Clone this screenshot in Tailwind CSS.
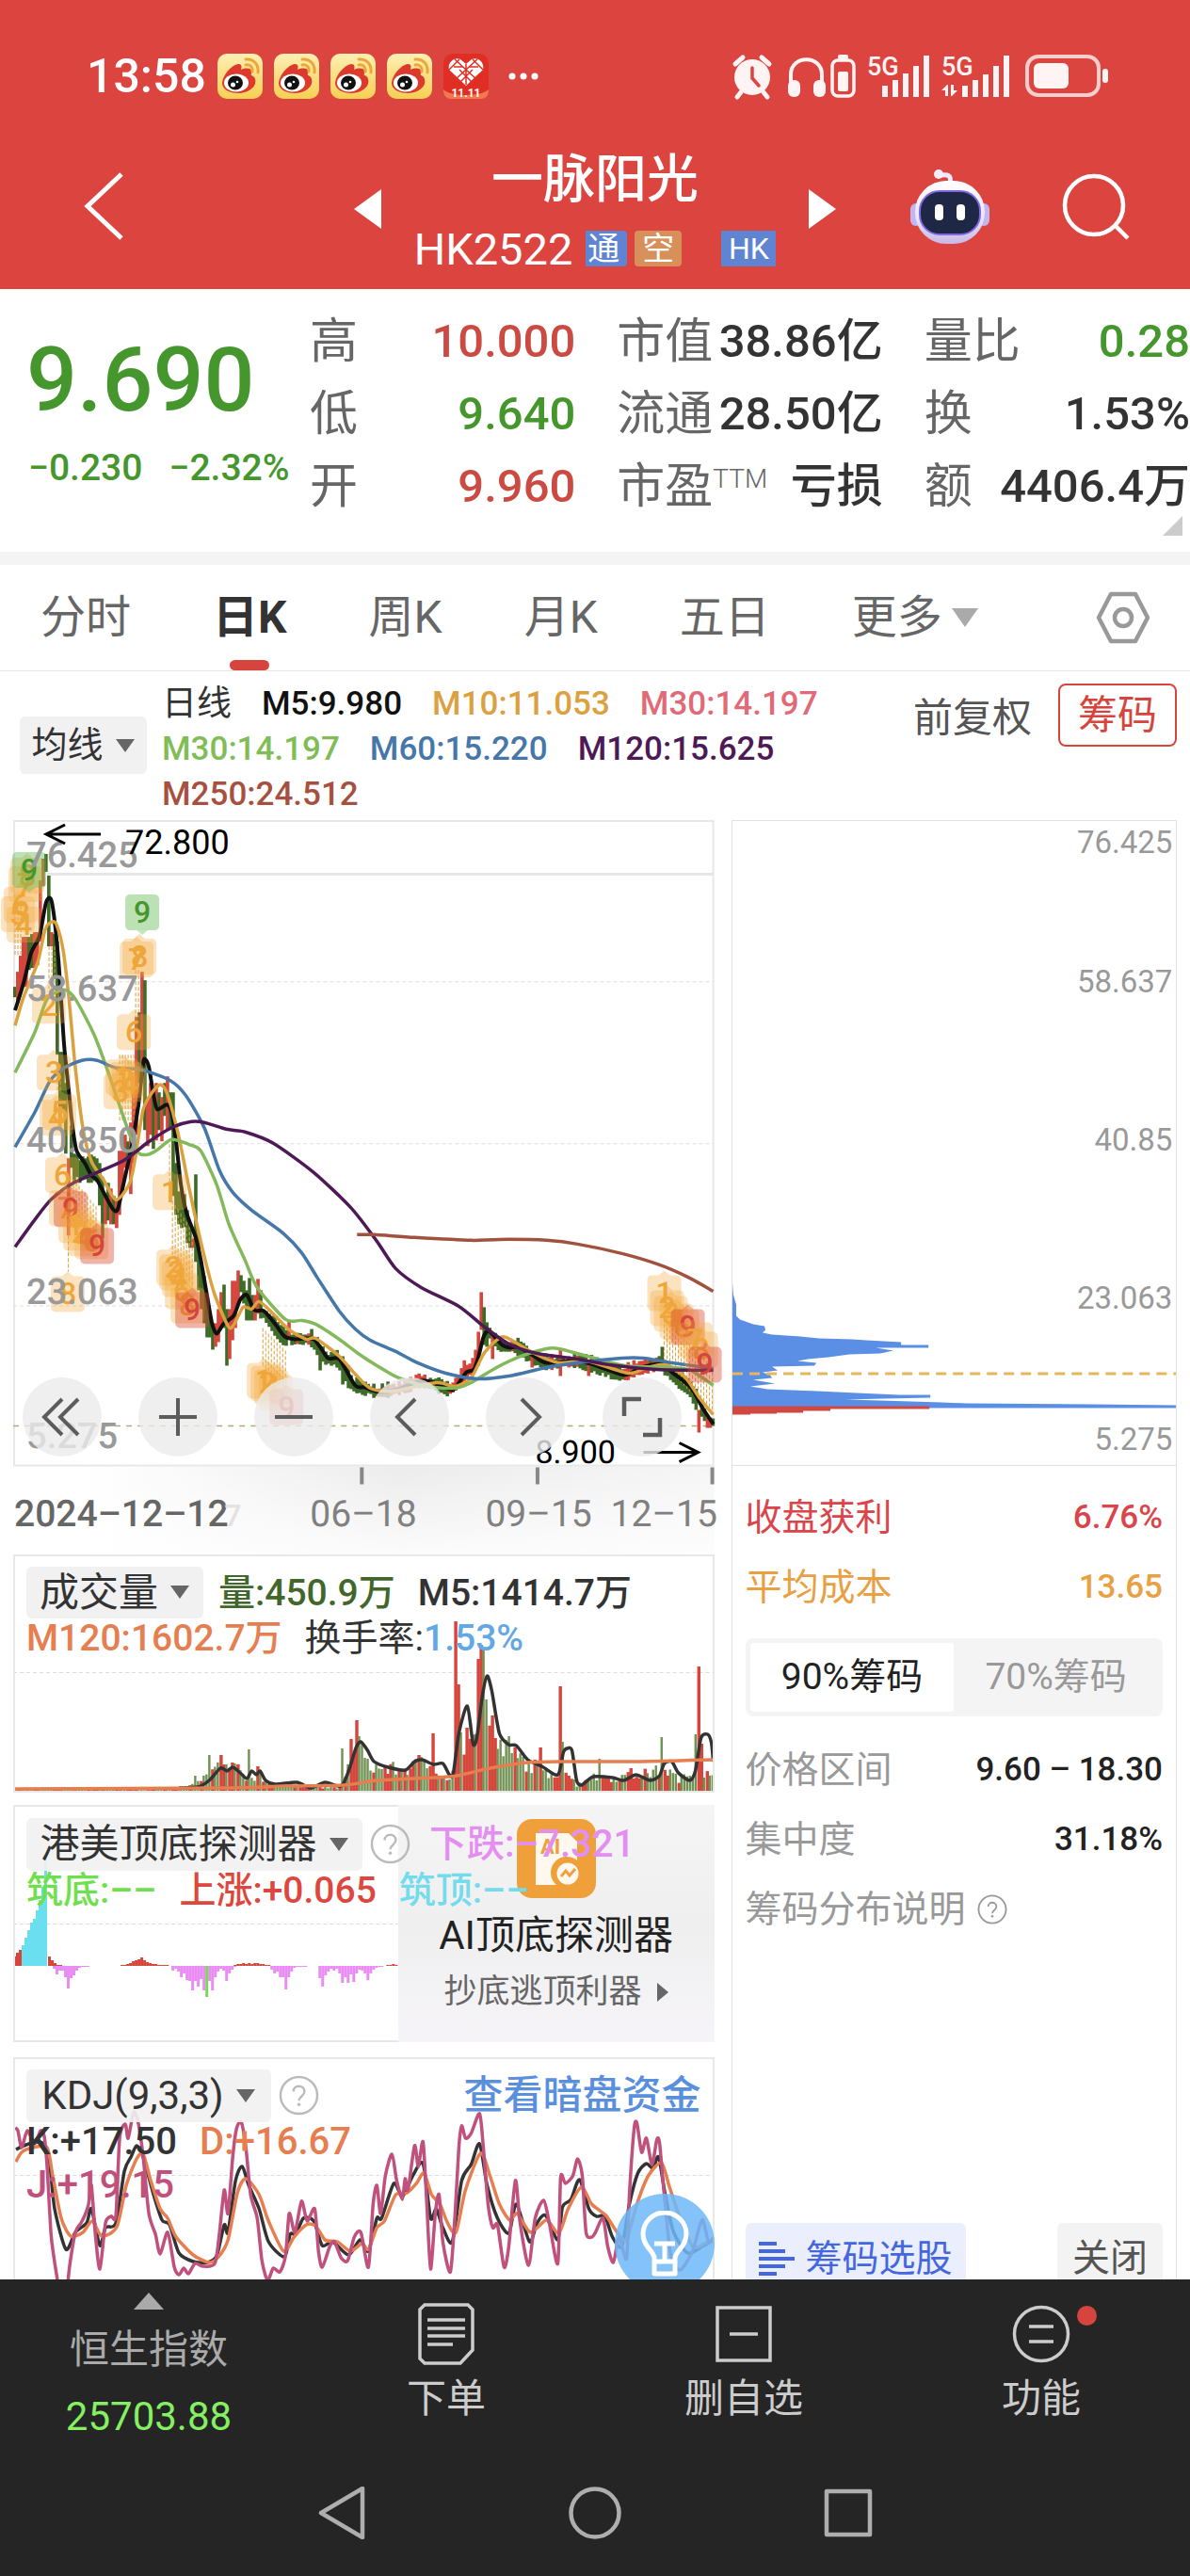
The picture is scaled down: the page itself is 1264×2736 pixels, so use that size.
<!DOCTYPE html>
<html lang="zh-CN">
<head>
<meta charset="utf-8">
<meta name="viewport" content="width=device-width, initial-scale=1">
<title>一脉阳光 HK2522</title>
<script src="https://cdn.jsdelivr.net/npm/@tailwindcss/browser@4"></script>
</head>
<body class="relative flex h-screen flex-col overflow-hidden bg-white font-['Roboto','Noto_Sans_CJK_SC',sans-serif] text-[#333]">

<!-- shared symbols -->
<svg class="absolute size-0" aria-hidden="true">
  <defs>
    <linearGradient id="wbg" x1="0" y1="0" x2="0" y2="1"><stop offset="0" stop-color="#fdf0b4"/><stop offset="1" stop-color="#f7cf52"/></linearGradient>
    <symbol id="weibo" viewBox="0 0 48 48">
      <rect width="48" height="48" rx="10" fill="url(#wbg)"/>
      <path d="M5 31C6 22 15 12 22 11c4 0 4 3 3 6 5-2 10-2 11 1 1 2-1 4 0 5 4 1 5 5 4 9-2 6-10 10-18 10C13 42 5 38 5 31z" fill="#dc3a2c"/>
      <ellipse cx="20" cy="31" rx="13" ry="9.500" fill="#fff"/>
      <ellipse cx="19" cy="31" rx="8" ry="7.500" fill="#111"/>
      <circle cx="16.500" cy="33" r="2.500" fill="#fff"/><circle cx="21" cy="30" r="1.300" fill="#fff"/>
      <path d="M30 6c8-1 14 5 13 14M30 12c4-1 8 2 7 7" fill="none" stroke="#eda63a" stroke-width="3" stroke-linecap="round"/>
    </symbol>
    <symbol id="down" viewBox="0 0 22 16"><path d="M1 1h20L11 15z" fill="currentColor"/></symbol>
    <symbol id="help" viewBox="0 0 44 44">
      <circle cx="22" cy="22" r="20" fill="none" stroke="currentColor" stroke-width="2.500"/>
      <path d="M16 18c0-8 12-8 12 0 0 5-6 5-6 10" fill="none" stroke="currentColor" stroke-width="2.500"/>
      <circle cx="22" cy="32" r="1.800" fill="currentColor"/>
    </symbol>
  </defs>
</svg>

<header class="shrink-0 bg-[#dc4440] text-white">
  <!-- status bar -->
  <div class="flex h-[148px] items-center justify-between pt-3.5 pr-[86px] pl-[92px]">
    <div class="flex items-center gap-3">
      <span class="text-[50px] leading-none font-medium">13:58</span>
      <svg class="size-12"><use href="#weibo"/></svg>
      <svg class="size-12"><use href="#weibo"/></svg>
      <svg class="size-12"><use href="#weibo"/></svg>
      <svg class="size-12"><use href="#weibo"/></svg>
      <svg class="size-12 overflow-visible" viewBox="0 0 48 48">
        <rect width="48" height="48" rx="10" fill="#e02e24"/>
        <path d="M0 38c8 8 40 8 48 0v2a8 8 0 0 1-8 8H8a8 8 0 0 1-8-8z" fill="#f2784e"/>
        <path d="M24 34 6 17c-2-8 6-14 12-11l6 5 6-5c6-3 14 3 12 11z" fill="#fff"/>
        <path d="m12 6 24 22M36 6 12 28M6 17l11-11M42 17 31 6M18 30l13-13M30 30 17 17M24 11v22M11 14h10M27 14h10" stroke="#e02e24" stroke-width="1.500" fill="none"/>
        <text x="24" y="46" text-anchor="middle" font-family="Roboto" font-weight="700" font-size="12" fill="#fff">11.11</text>
      </svg>
      <svg class="ml-2 w-9" viewBox="0 0 36 8" fill="#fff"><circle cx="5" cy="4" r="3.500"/><circle cx="17" cy="4" r="3.500"/><circle cx="29" cy="4" r="3.500"/></svg>
    </div>
    <svg class="h-12 w-[402px] overflow-visible" viewBox="776 57 402 48" fill="#fff3f3">
      <circle cx="799" cy="82" r="19"/><path d="m781 68 8-7M817 68l-8-7M787 98l-4 5M811 98l4 5" stroke="#fff3f3" stroke-width="5" stroke-linecap="round"/>
      <path d="M799 72v11l7 8" fill="none" stroke="#dc4440" stroke-width="3.500" stroke-linecap="round"/>
      <path d="M840 88v-9c0-21 33-21 33 0v9" fill="none" stroke="#fff3f3" stroke-width="4"/><rect x="837" y="85" width="13" height="18" rx="6"/><rect x="864" y="85" width="13" height="18" rx="6"/>
      <rect x="884" y="64" width="23" height="38" rx="6" fill="none" stroke="#fff3f3" stroke-width="3.500"/><rect x="890" y="76" width="11" height="21" rx="2"/><rect x="890" y="58" width="11" height="5" rx="2"/>
      <text x="921" y="80" font-family="Roboto" font-size="27" font-weight="500">5G</text>
      <path d="M937 91h6v12h-6zM948 85h6v18h-6zM959 78h6v25h-6zM970 70h6v33h-6zM981 59h6v44h-6z"/>
      <text x="1000" y="80" font-family="Roboto" font-size="27" font-weight="500">5G</text>
      <path d="M1022 91h6v12h-6zM1033 85h6v18h-6zM1044 79h6v24h-6zM1055 70h6v33h-6zM1066 59h6v44h-6zM1006 90l-6 6h4v6h3V90zM1011 102l6-6h-4v-6h-3v12z"/>
      <rect x="1091" y="60" width="76" height="41" rx="12" fill="none" stroke="#f6cfcd" stroke-width="4"/><rect x="1098" y="67" width="37" height="27" rx="6"/><rect x="1171" y="73" width="6" height="15" rx="3"/>
    </svg>
  </div>
  <!-- title bar -->
  <div class="grid h-[159px] grid-cols-[1fr_514px_1fr]">
    <div class="flex h-36 items-center pl-[88px]">
      <button aria-label="返回"><svg class="h-20 w-11" viewBox="0 0 44 80"><path d="M41 5 5 39l36 34" fill="none" stroke="#fff" stroke-width="5"/></svg></button>
    </div>
    <div class="flex justify-between">
      <button aria-label="上一只" class="h-[148px]"><svg class="w-[30px]" viewBox="0 0 30 42"><path d="M30 0v42L1 21z" fill="#fff"/></svg></button>
      <div class="pt-[3px]">
        <h1 class="text-center text-[55px] leading-[78px] font-medium">一脉阳光</h1>
        <div class="flex h-[70px] items-center justify-center">
          <span class="mr-3.5 text-[47px] leading-none">HK2522</span>
          <span class="mr-2 flex w-11 justify-end overflow-hidden rounded-r bg-[#5e84d2] pr-2 text-[34px] leading-[38px]">通</span>
          <span class="mr-[42px] w-[50px] rounded bg-[#d8905a] text-center text-[34px] leading-[38px]">空</span>
          <span class="w-[58px] bg-[#5e84d2] text-center text-[32px] leading-[38px]">HK</span>
        </div>
      </div>
      <button aria-label="下一只" class="h-[148px]"><svg class="w-[30px]" viewBox="0 0 30 42"><path d="M0 0v42l29-21z" fill="#fff"/></svg></button>
    </div>
    <div class="flex h-36 items-center justify-end gap-[76px] pr-16">
      <button aria-label="智能助手"><svg class="w-[86px]" viewBox="0 0 86 80">
        <defs><linearGradient id="rb" x1="0" y1="0" x2="0" y2="1"><stop offset="0" stop-color="#fff"/><stop offset=".6" stop-color="#e6e4f8"/><stop offset="1" stop-color="#c9b8e6"/></linearGradient></defs>
        <path d="M43 14c2-8-3-9-9-8" fill="none" stroke="#eee9fb" stroke-width="5" stroke-linecap="round"/><circle cx="31" cy="5" r="5" fill="#f2effc"/>
        <rect x="1" y="36" width="12" height="24" rx="6" fill="#c3b5ef"/><rect x="73" y="36" width="12" height="24" rx="6" fill="#c3b5ef"/>
        <rect x="6" y="12" width="74" height="67" rx="33" fill="url(#rb)"/><rect x="11" y="23" width="64" height="46" rx="21" fill="#1e2746" stroke="#7d68e2" stroke-width="2"/>
        <rect x="27" y="37" width="9" height="17" rx="4" fill="#fff"/><rect x="50" y="37" width="9" height="17" rx="4" fill="#fff"/>
      </svg></button>
      <button aria-label="搜索"><svg class="w-[72px]" viewBox="0 0 72 72" fill="none" stroke="#fff" stroke-width="4.500"><circle cx="34" cy="34" r="31"/><path d="m57 56 13 13"/></svg></button>
    </div>
  </div>
</header>

<main class="min-h-0 flex-1 overflow-y-auto [scrollbar-width:none]">
  <!-- quote -->
  <section class="relative flex pb-[31px] whitespace-nowrap">
    <div class="w-[329px] shrink-0 pt-[46px] pl-7 text-[#45962d]">
      <div class="text-[95px] leading-[102px] font-medium">9.690</div>
      <div class="flex gap-7 pl-0.5 text-[39px] leading-[84px] font-medium"><span>−0.230</span><span>−2.32%</span></div>
    </div>
    <dl class="grid flex-1 grid-cols-3 gap-x-11 pt-[17px] text-[49px] leading-[77px] font-medium text-[#333] *:flex *:justify-between">
      <div><dt class="text-[51px] font-normal text-[#666]">高</dt><dd class="text-[#cb4a42]">10.000</dd></div>
      <div><dt class="text-[51px] font-normal text-[#666]">市值</dt><dd>38.86亿</dd></div>
      <div><dt class="text-[51px] font-normal text-[#666]">量比</dt><dd class="text-[#45962d]">0.28</dd></div>
      <div><dt class="text-[51px] font-normal text-[#666]">低</dt><dd class="text-[#45962d]">9.640</dd></div>
      <div><dt class="text-[51px] font-normal text-[#666]">流通</dt><dd>28.50亿</dd></div>
      <div><dt class="text-[51px] font-normal text-[#666]">换</dt><dd>1.53%</dd></div>
      <div><dt class="text-[51px] font-normal text-[#666]">开</dt><dd class="text-[#cb4a42]">9.960</dd></div>
      <div><dt class="flex text-[51px] font-normal text-[#666]">市盈<span class="text-[28px] leading-[62px] font-light">TTM</span></dt><dd>亏损</dd></div>
      <div><dt class="text-[51px] font-normal text-[#666]">额</dt><dd>4406.4万</dd></div>
    </dl>
    <svg class="absolute right-2 bottom-[17px] size-[21px]" viewBox="0 0 21 21"><path d="M21 0v21H0z" fill="#ccc"/></svg>
  </section>

  <!-- period tabs -->
  <nav class="flex h-[127px] items-center gap-[87px] border-t-[14px] border-b border-t-[#f4f4f4] border-b-[#e6e6e6] pr-[42px] pl-[43px] text-[48px] leading-none whitespace-nowrap text-[#666]">
    <a href="#">分时</a>
    <a href="#" class="relative flex h-full items-center font-bold text-[#333]">日K<span class="absolute bottom-0 left-1/2 h-[11px] w-[42px] -translate-x-1/2 rounded-md bg-[#d6453d]"></span></a>
    <a href="#">周K</a>
    <a href="#">月K</a>
    <a href="#">五日</a>
    <button class="flex items-center gap-2.5">更多<svg class="h-5 w-7 text-[#aaa]" viewBox="0 0 22 16" preserveAspectRatio="none"><path d="M0 0h22L11 16z" fill="currentColor"/></svg></button>
    <button aria-label="设置" class="ml-auto"><svg class="w-[58px]" viewBox="0 0 58 56" fill="none" stroke="#999" stroke-width="4.500" stroke-linejoin="round"><path d="M16 3h26l13 25-13 25H16L3 28z"/><circle cx="29" cy="28" r="9"/></svg></button>
  </nav>

  <!-- moving average legend -->
  <section class="flex items-start pt-[11px] pr-[14px] pb-[3px] pl-[21px] whitespace-nowrap">
    <button class="mt-[37px] mr-[16px] flex h-[61px] w-[135px] items-center justify-center gap-3 rounded-md bg-[#f1f1f1] text-[38px]">均线<svg class="h-4 w-[22px] text-[#666]"><use href="#down"/></svg></button>
    <div class="flex-1 text-[35px] leading-[48px] font-medium">
      <div class="flex gap-8"><span class="text-[37px] font-normal">日线</span><span class="text-[#111]">M5:9.980</span><span class="text-[#dba13f]">M10:11.053</span><span class="text-[#e06a76]">M30:14.197</span></div>
      <div class="flex gap-8"><span class="text-[#80bd57]">M30:14.197</span><span class="text-[#4577a8]">M60:15.220</span><span class="text-[#4d1a56]">M120:15.625</span></div>
      <div class="text-[#a6513f]">M250:24.512</div>
    </div>
    <div class="flex items-center gap-7 pt-0.5 text-[42px] leading-none"><span class="pt-1.5 text-[#555]">前复权</span><button class="h-[67px] rounded-lg border-2 border-[#d6453d] px-[19px] text-[#d6453d]">筹码</button></div>
  </section>

  <div class="grid grid-cols-[744fr_473fr] gap-x-[18px] px-[14px]">
    <div class="flex flex-col">
      <!-- candlestick chart -->
      <div class="relative">
        <svg id="kline" class="block h-auto w-full overflow-visible font-medium" viewBox="14 871 744 779" font-family="Roboto" text-rendering="geometricPrecision">
          <defs><linearGradient id="haze" x1="0" x2="1"><stop offset=".1" stop-color="#eee" stop-opacity="0"/><stop offset=".55" stop-color="#ececec"/><stop offset="1" stop-color="#f6f6f6"/></linearGradient>
          <linearGradient id="fade" x1="0" y1="0" x2="0" y2="1"><stop offset="0" stop-color="#fff" stop-opacity="0"/><stop offset="1" stop-color="#fff" stop-opacity=".8"/></linearGradient></defs>
          <rect x="14" y="1557" width="744" height="93" fill="url(#haze)"/><rect x="14" y="1557" width="744" height="93" fill="url(#fade)"/>
          <rect x="15" y="872" width="742" height="684" fill="#fff" stroke="#e8e8e8" stroke-width="2"/>
          <path d="M50 928.500h707" stroke="#e6e6e6" stroke-width="3"/>
          <path d="M14 1042.500h743M14 1214.500h743M14 1386.500h743" stroke="#ddd" stroke-width="1" stroke-dasharray="4 3"/>
          <path d="M14 1514h743" stroke="#b9a779" stroke-width="1.500" stroke-dasharray="6 6"/>
        </svg>
        <div class="absolute top-[592px] right-[35px] left-[10px] flex justify-between text-[#5c5c5c] *:flex *:size-[84px] *:items-center *:justify-center *:rounded-full *:bg-[#ebebeb]/80">
          <button aria-label="最左"><svg class="size-11" viewBox="0 0 44 44" fill="none" stroke="currentColor" stroke-width="4"><path d="M22 3 3 22l19 19M39 3 20 22l19 19"/></svg></button>
          <button aria-label="放大"><svg class="size-11" viewBox="0 0 44 44" stroke="currentColor" stroke-width="4"><path d="M2 22h40M22 2v40"/></svg></button>
          <button aria-label="缩小"><svg class="size-11" viewBox="0 0 44 44" stroke="currentColor" stroke-width="4"><path d="M2 22h40"/></svg></button>
          <button aria-label="左移"><svg class="size-11" viewBox="0 0 44 44" fill="none" stroke="currentColor" stroke-width="4"><path d="M28 3 9 22l19 19"/></svg></button>
          <button aria-label="右移"><svg class="size-11" viewBox="0 0 44 44" fill="none" stroke="currentColor" stroke-width="4"><path d="m18 3 19 19-19 19"/></svg></button>
          <button aria-label="全屏"><svg class="size-11" viewBox="0 0 44 44" fill="none" stroke="currentColor" stroke-width="4.500"><path d="M3 21V3h18M41 23v18H23"/></svg></button>
        </div>
      </div>

      <!-- volume -->
      <section class="relative mb-[13px] h-[253px] border-2 border-[#e8e8e8] bg-white whitespace-nowrap">
        <svg id="vol" class="absolute inset-0 size-full" viewBox="16 1652 740 249" preserveAspectRatio="none"><path d="M14 1775.500h743" stroke="#ddd" stroke-dasharray="4 3"/></svg>
        <div class="relative pt-[11px] pl-3 text-[39px] font-medium">
          <div class="flex h-[55px] items-center"><button class="mr-4 flex h-full w-[188px] items-center justify-center gap-3 rounded-md bg-[#f1f1f1] text-[42px] font-normal">成交量<svg class="h-4 w-[22px] text-[#666]"><use href="#down"/></svg></button><span class="mr-6 pt-0.5 text-[#41672b]">量:450.9万</span><span class="pt-0.5">M5:1414.7万</span></div>
          <div class="flex gap-6 leading-[42px]"><span class="text-[#e67e50]">M120:1602.7万</span><span class="font-normal">换手率:<span class="font-medium text-[#63a8e4]">1.53%</span></span></div>
        </div>
      </section>

      <!-- top/bottom detector -->
      <section class="relative mb-4 h-[252px] border-2 border-[#e8e8e8] whitespace-nowrap">
        <svg id="det" class="absolute inset-0 size-full" viewBox="16 1918 740 248" preserveAspectRatio="none"><path d="M14 2042.500h410" stroke="#ddd" stroke-dasharray="4 3"/></svg>
        <a href="#" class="absolute -inset-y-0.5 -right-0.5 flex w-[336px] flex-col items-center bg-linear-to-b from-[#f5f5f6] via-[#efefef] to-[#f6f4f8] pt-[15px]">
          <svg class="size-[84px]" viewBox="0 0 84 84"><rect width="84" height="84" rx="16" fill="#f0a03a"/><path d="M20 15h35l9 9v20a15 15 0 0 0-22 26H20z" fill="#fff8ee"/><text x="25" y="37" font-family="Roboto" font-weight="700" font-size="22" fill="#f0a03a">AI</text><circle cx="54" cy="58" r="13" fill="#fff8ee" stroke="#f0a03a" stroke-width="3"/><path d="m47 61 5-6 4 5 6-7" fill="none" stroke="#f0a03a" stroke-width="3"/></svg>
          <span class="mt-2 text-[42px] leading-[64px] text-[#222]">AI顶底探测器</span>
          <span class="mt-0.5 flex items-center gap-4 text-[35px] leading-[52px] text-[#666]">抄底逃顶利器<svg class="h-5 w-3" viewBox="0 0 12 20"><path d="M0 0v20l12-10z" fill="#666"/></svg></span>
        </a>
        <div class="relative pt-3 pl-3 text-[39px] font-medium">
          <div class="flex h-[56px] items-center"><button class="mr-2 flex h-full w-[357px] items-center justify-center gap-3 rounded-md bg-[#f1f1f1]/90 text-[42px] font-normal">港美顶底探测器<svg class="h-4 w-[22px] text-[#666]"><use href="#down"/></svg></button><button aria-label="说明" class="mr-5 text-[#bbb]"><svg class="size-[43px]"><use href="#help"/></svg></button><span class="text-[40px] text-[#e38ef0]">下跌:–7.321</span></div>
          <div class="flex gap-6 leading-[42px]"><span class="text-[#70df4e]">筑底:––</span><span class="text-[#dd473d]">上涨:+0.065</span><span class="text-[#72dbec]">筑顶:––</span></div>
        </div>
      </section>

      <!-- KDJ -->
      <section class="relative h-[253px] border-2 border-[#e8e8e8] whitespace-nowrap">
        <svg id="kdj" class="absolute inset-0 size-full" viewBox="16 2186 740 249" preserveAspectRatio="none"><path d="M14 2309.500h743" stroke="#ddd" stroke-dasharray="4 3"/></svg>
        <div class="relative pt-[11px] pl-3 text-[40px] font-medium">
          <div class="flex h-14 items-center"><button class="mr-2 flex h-full w-[260px] items-center justify-center gap-3 rounded-md bg-[#f1f1f1]/90 text-[42px] font-normal">KDJ(9,3,3)<svg class="h-4 w-[22px] text-[#666]"><use href="#down"/></svg></button><button aria-label="说明" class="text-[#bbb]"><svg class="size-[43px]"><use href="#help"/></svg></button><a href="#" class="mr-[12px] ml-auto text-[42px] text-[#5a8fdd]">查看暗盘资金</a></div>
          <div class="flex gap-6 leading-[42px]"><span>K:+17.50</span><span class="text-[#e67e50]">D:+16.67</span></div>
          <div class="mt-1 leading-[42px] text-[#c0507c]">J:+19.15</div>
        </div>
        <button aria-label="提示" class="absolute top-[143px] -right-0.5 size-[106px] rounded-full bg-[#6db8f8]/85"><svg class="mx-auto size-[70px]" viewBox="0 0 70 70" fill="none" stroke="#fff" stroke-width="5" stroke-linejoin="round"><path d="M24 50c-1-8-12-12-12-25a23 23 0 0 1 46 0c0 13-11 17-12 25v17H24zM24 54h22M35 52V35M24 35h22"/></svg></button>
      </section>
    </div>

    <!-- chip distribution -->
    <aside class="flex flex-col border border-[#e2e2e2] whitespace-nowrap">
      <svg class="block h-auto w-full border-b border-[#e2e2e2]" viewBox="778 872 471 683" font-family="Roboto" font-size="33" fill="#999">
        <path fill="#5a8fe5" d="M778 1362L779 1375 782 1385 782 1397 786 1401 800 1406 812 1408 813 1412 810 1415 820 1417 850 1419 870 1421 905 1422 920 1423 957 1425V1428H986V1431H930L949 1434 935 1437 902 1438 880 1441 858 1443 847 1445 867 1447 865 1450 820 1451 826 1455 810 1457 818 1460 820 1463 800 1465 823 1469 797 1472 815 1475 868 1477 910 1479 955 1481H988V1484L938 1485 898 1486 935 1487 1000 1489 1026 1490 1158 1491 1249 1492V1495H778z"/>
        <path fill="#cf4842" d="M778 1493H987V1496H882V1498H853V1500H825V1501H797V1502H778z"/>
        <path d="M778 1458.500h471" stroke="#e6b65c" stroke-width="3" stroke-dasharray="11 7"/>
        <g text-anchor="end"><text x="1245" y="906">76.425</text><text x="1245" y="1054">58.637</text><text x="1245" y="1222">40.85</text><text x="1245" y="1390">23.063</text><text x="1245" y="1539">5.275</text></g>
      </svg>
      <div class="flex flex-1 flex-col px-[14px] pt-[18px] text-[39px] leading-[74px]">
        <div class="flex justify-between text-[#d9454a]"><span>收盘获利</span><span class="text-[35px] font-medium">6.76%</span></div>
        <div class="flex justify-between text-[#e8a042]"><span>平均成本</span><span class="text-[35px] font-medium">13.65</span></div>
        <div class="mt-[17px] mb-5 flex h-[83px] rounded-lg bg-[#f4f4f4] p-[5px] leading-[73px]"><button class="flex-1 rounded bg-white text-[#222]">90%筹码</button><button class="flex-1 text-[#999]">70%筹码</button></div>
        <div class="flex justify-between"><span class="text-[#999]">价格区间</span><span class="text-[35px] font-medium text-[#222]">9.60 – 18.30</span></div>
        <div class="flex justify-between"><span class="text-[#999]">集中度</span><span class="text-[35px] font-medium text-[#222]">31.18%</span></div>
        <a href="#" class="flex items-center gap-3 text-[#999]">筹码分布说明<svg class="size-8"><use href="#help"/></svg></a>
        <div class="mt-auto flex h-[76px] justify-between">
          <button class="flex items-center gap-3 rounded-t-md bg-[#eaeefd] pr-3.5 pl-[14px] text-[#4467e0]"><svg class="h-9 w-[38px]" viewBox="0 0 38 36" stroke="currentColor" stroke-width="4"><path d="M0 2h19M0 10h28M0 18h38M0 26h28M0 34h19"/></svg>筹码选股</button>
          <button class="w-[112px] rounded-t-md bg-[#f3f3f3] text-[40px] text-[#555]">关闭</button>
        </div>
      </div>
    </aside>
  </div>
</main>

<footer class="shrink-0 bg-[#252525] text-[#ccc]">
  <div class="grid h-[180px] grid-cols-4 text-[42px]">
    <button class="flex flex-col items-center pt-3.5"><svg class="h-[18px] w-8" viewBox="0 0 32 18"><path d="M16 0 32 18H0z" fill="#aaa"/></svg><span class="mt-2 leading-[70px] text-[#aaa]">恒生指数</span><span class="leading-[72px] text-[#84f062]">25703.88</span></button>
    <button class="flex flex-col items-center pt-6"><svg class="size-[68px]" viewBox="0 0 68 68" fill="none" stroke="#ccc" stroke-width="3.500"><path d="M11 3h46l5 5v43L49 65H11l-5-5V8z"/><path d="M14 19h40M14 28h40M14 36h40M14 45h27"/></svg><span class="leading-[70px]">下单</span></button>
    <button class="flex flex-col items-center pt-6"><svg class="size-[68px]" viewBox="0 0 68 68" fill="none" stroke="#ccc" stroke-width="3.500"><path d="M6 6h56v56H6zM19 34h30"/></svg><span class="leading-[70px]">删自选</span></button>
    <button class="relative flex flex-col items-center pt-6"><svg class="size-[68px]" viewBox="0 0 68 68" fill="none" stroke="#ccc" stroke-width="3.500"><circle cx="34" cy="34" r="28.500"/><path d="M21 26h26M21 42h26"/></svg><span class="absolute top-7 left-1/2 ml-[38px] size-[21px] rounded-full bg-[#d6453d]"></span><span class="leading-[70px]">功能</span></button>
  </div>
  <div class="flex h-[135px] items-center justify-center gap-[213px]">
    <button aria-label="系统返回"><svg class="size-14" viewBox="0 0 56 56" fill="none" stroke="#aeaeae" stroke-width="4.500" stroke-linejoin="round"><path d="M50 2v52L6 28z"/></svg></button>
    <button aria-label="主页"><svg class="size-14" viewBox="0 0 56 56" fill="none" stroke="#aeaeae" stroke-width="4.500"><circle cx="28" cy="28" r="25.500"/></svg></button>
    <button aria-label="多任务"><svg class="size-14" viewBox="0 0 56 56" fill="none" stroke="#aeaeae" stroke-width="4.500" stroke-linejoin="round"><path d="M5 5h46v46H5z"/></svg></button>
  </div>
</footer>

<script>
const NS = 'http://www.w3.org/2000/svg';
function add(parent, name, attrs, text) {
  const el = document.createElementNS(NS, name);
  for (const k in attrs) el.setAttribute(k, attrs[k]);
  if (text !== undefined) el.textContent = text;
  parent.appendChild(el);
  return el;
}
const pairs = s => s.trim().split(/\s+/).map(p => p.split(',').map(Number));
function curve(pts) {
  let d = 'M' + pts[0];
  for (let i = 0; i < pts.length - 1; i++) {
    const a = pts[i - 1] || pts[i], b = pts[i], c = pts[i + 1], e = pts[i + 2] || c;
    d += 'C' + [b[0] + (c[0] - a[0]) / 8, b[1] + (c[1] - a[1]) / 8, c[0] - (e[0] - b[0]) / 8, c[1] - (e[1] - b[1]) / 8, c[0], c[1]];
  }
  return d;
}
const line = (svg, s, color, w) => add(svg, 'path', { d: curve(typeof s === 'string' ? pairs(s) : s), fill: 'none', stroke: color, 'stroke-width': w, 'stroke-linejoin': 'round' });
function at(pts, x) {
  for (let i = 1; i < pts.length; i++) if (x <= pts[i][0]) {
    const [a, b] = [pts[i - 1], pts[i]];
    return a[1] + (b[1] - a[1]) * (x - a[0]) / (b[0] - a[0]);
  }
  return pts[pts.length - 1][1];
}
let seed = 7;
const rnd = () => (seed = (seed * 16807) % 2147483647) / 2147483647;
const RED = '#d6453b', GREEN = '#3d6a26';

/* ---- candlesticks ---- */
const k = document.getElementById('kline');
const ma5 = pairs('16,1073 25,1044 33,1012 42,994 49,958 55,958 62,1019 68,1109 73,1158 76,1188 81,1221 90,1235 97,1248 103,1253 112,1270 120,1284 125,1284 132,1253 140,1216 147,1173 152,1129 154,1125 158,1133 163,1163 167,1178 177,1173 182,1181 187,1213 192,1258 198,1288 208,1315 213,1337 220,1377 225,1405 230,1416 237,1406 248,1397 255,1380 262,1375 270,1391 280,1392 293,1407 302,1419 313,1422 333,1422 348,1442 360,1443 377,1471 387,1473 403,1478 423,1475 447,1466 460,1468 480,1476 488,1467 495,1457 503,1454 508,1440 513,1420 518,1413 523,1417 533,1428 542,1431 550,1430 567,1440 580,1447 613,1445 633,1450 663,1460 680,1452 702,1448 713,1457 733,1473 747,1497 757,1512');
const early = '15,1048,1059,g 18,1032,1065,r 21,1015,1052,r 24,995,1048,r 27,995,1048,r 30,995,1030,g 33,992,1028,g 36,990,1028,r 39,990,1025,r 42,935,1000,r 45,912,941,r 48,907,926,g 51,930,1005,g 54,990,1005,r 57,992,1040,g 60,1000,1120,g 63,1117,1190,g 66,1117,1180,g 69,1150,1225,g 72,1230,1312,r 75,1195,1240,g 78,1225,1255,g 81,1226,1250,g 84,1232,1256,g 87,1228,1250,g 90,1230,1252,g 93,1228,1256,g 96,1226,1256,g 99,1228,1254,g 102,1230,1255,g 105,1235,1280,g 108,1250,1315,g 111,1270,1300,r 114,1256,1296,g 117,1262,1300,r 120,1270,1300,g 123,1275,1304,r 126,1222,1290,r 129,1222,1262,r 132,1205,1240,r 135,1212,1230,g 138,1192,1268,r 141,1158,1235,r 144,1080,1205,r 147,1075,1150,g 150,1032,1130,r 153,1041,1200,g 156,1165,1217,r 159,1150,1205,r 162,1165,1220,g 165,1150,1211,r 168,1160,1200,g 171,1165,1212,r 174,1150,1185,g 177,1143,1200,r 180,1160,1200,g 183,1160,1270,g 186,1235,1290,g 189,1265,1300,g 192,1268,1304,g 195,1268,1303,g 198,1285,1320,g 201,1300,1325,g 204,1315,1325,r 207,1247,1340,g 210,1310,1370,g 213,1340,1390,g 216,1355,1405,g 219,1380,1420,g 222,1395,1420,g 225,1405,1433,g 228,1405,1430,r 231,1390,1425,r 234,1372,1410,r 237,1364,1410,g 240,1390,1450,g 243,1390,1443,r 246,1360,1423,r 249,1360,1410,r 252,1349,1385,r 255,1354,1372,g 258,1360,1384,g 261,1370,1402,g 264,1357,1402,g 267,1375,1402,g 270,1375,1402,r 273,1358,1395,r 276,1370,1400,g';
const special = { 306: [1403, 1420, 'r'], 339: [1428, 1455, 'g'], 363: [1440, 1470, 'g'], 507: [1414, 1450, 'r'], 510: [1372, 1412, 'r'], 513: [1388, 1428, 'g'], 516: [1404, 1430, 'g'], 522: [1418, 1443, 'r'], 564: [1440, 1452, 'r'], 594: [1433, 1461, 'r'], 624: [1445, 1461, 'r'], 702: [1430, 1450, 'g'], 741: [1497, 1521, 'r'], 750: [1505, 1516, 'r'], 753: [1505, 1516, 'r'], 756: [1506, 1514, 'g'] };
const candles = early.split(' ').map(c => { const [x, a, b, t] = c.split(','); return [+x, +a, +b, t]; });
for (let x = 279; x < 758; x += 3) {
  if (special[x]) { candles.push([x, ...special[x]]); continue; }
  const y = at(ma5, Math.min(757, x + 3)), slope = at(ma5, Math.min(757, x + 6)) - at(ma5, x - 3);
  const h = 7 + rnd() * 9 + Math.abs(slope) / 2;
  candles.push([x, y - h / 2 + (rnd() - .5) * 5, y + h / 2, slope + (rnd() - .5) * 6 > 0 ? 'g' : 'r']);
}
candles.forEach(([x, a, b, t]) => add(k, 'rect', { x: x - 1, y: a, width: 3.6, height: b - a, fill: t === 'r' ? RED : GREEN }));
/* connectors between signals and candles */
for (const [x0, x1, y0, y1, m] of [[16, 24, 950, 1015, 0], [52, 58, 1005, 1050, 0], [61, 66, 1130, 1160, 0], [72, 102, 1245, 1300, 1.2], [127, 142, 1120, 1190, 0], [144, 147, 1030, 1080, 0], [180, 181, 1215, 1260, 0], [183, 204, 1275, 1335, 1.5], [279, 303, 1410, 1450, 1], [705, 756, 1400, 1450, 1]])
  for (let x = x0; x <= x1; x += 3) add(k, 'path', { d: `M${x} ${y0 + (x - x0) * m}V${y1 + (x - x0) * m}`, stroke: '#d6a23e', 'stroke-width': 1, 'stroke-dasharray': '4 2' });
add(k, 'path', { d: 'M72.500 1312V1350', stroke: '#d6a23e', 'stroke-dasharray': '4 2' });
line(k, ma5, '#111', 4);
line(k, '16,1089 25,1059 40,1022 48,987 55,979 60,982 67,1009 73,1059 80,1134 88,1198 97,1233 110,1253 123,1274 137,1258 143,1233 152,1178 163,1158 171,1152 178,1163 190,1208 200,1258 213,1318 227,1372 242,1408 248,1407 258,1388 267,1390 275,1382 290,1395 307,1412 325,1422 335,1421 360,1440 377,1459 393,1474 417,1477 463,1468 483,1472 500,1463 513,1438 527,1423 537,1420 567,1437 593,1447 623,1445 667,1458 687,1452 707,1449 727,1462 743,1485 757,1502', '#dba13f', 3.5);
line(k, '16,1139 37,1096 50,1061 68,1051 80,1061 100,1099 115,1139 137,1203 147,1224 157,1226 167,1221 182,1210 200,1215 213,1222 230,1258 243,1300 260,1338 273,1367 303,1401 320,1402 335,1406 360,1422 380,1437 400,1450 423,1463 453,1472 483,1474 500,1468 527,1452 553,1440 580,1432 593,1432 620,1439 663,1450 713,1452 733,1455 757,1471', '#84b95b', 3.5);
line(k, '16,1218 37,1181 53,1148 68,1134 87,1126 103,1126 123,1134 150,1136 180,1147 197,1163 217,1198 233,1243 247,1266 267,1285 300,1309 320,1330 337,1357 360,1392 377,1411 393,1423 420,1435 443,1447 473,1458 507,1464 540,1461 580,1452 613,1447 660,1442 683,1442 713,1447 757,1453', '#4577a8', 3.5);
line(k, '16,1324 37,1295 55,1273 80,1255 130,1233 157,1213 183,1197 203,1191 217,1192 240,1199 260,1202 290,1214 333,1245 373,1283 400,1318 420,1347 447,1367 487,1387 513,1408 540,1427 570,1437 613,1443 647,1449 697,1454 757,1455', '#4d1a56', 3.5);
line(k, '379,1311 397,1311 440,1314 500,1317 540,1316 580,1317 613,1321 660,1331 700,1343 730,1356 757,1371', '#a0523f', 3.5);
/* nine-turn signals: x, y, digit, kind */
const signals = '19,970,5,o 25,981,4,o 22,960,6,o 27,938,7,o 29,929,8,o 31,923,9,g 52,1067,2,o 57,1138,3,o 60,1186,4,o 63,1180,5,o 66,1247,6,o 70,1282,7,o 75,1283,9,r 80,1300,1,o 85,1308,2,o 90,1314,4,o 97,1317,6,o 103,1322,9,r 72,1373,8,o 130,1143,1,o 134,1146,2,o 137,1150,4,o 128,1158,3,o 142,1095,6,o 145,1018,7,o 148,1015,8,o 151,968,9,g 180,1265,1,o 184,1345,2,o 187,1350,3,o 190,1357,4,o 193,1370,6,o 199,1385,8,o 204,1390,9,r 280,1465,1,o 284,1468,2,o 288,1472,4,o 293,1478,6,o 304,1493,9,r 705,1372,1,o 708,1388,2,o 712,1394,3,o 718,1402,4,o 724,1408,6,o 730,1408,9,r 738,1422,7,o 744,1432,8,o 748,1448,9,r';
const sg = add(k, 'g', { 'font-size': 32, 'text-anchor': 'middle' });
signals.split(' ').forEach(s => {
  const [x, y, n, t] = s.split(','), X = +x, Y = +y;
  const fill = { o: '#f2a93c', g: '#5cb84e', r: '#dc4a30' }[t], ink = { o: '#eda63a', g: '#45962d', r: '#d6453b' }[t];
  const d = t === 'g' ? `M${X - 6} ${Y + 20}h12l-6 5z` : `M${X - 6} ${Y - 18}h12l-6-5z`;
  add(sg, 'path', { d, fill, 'fill-opacity': .35 });
  add(sg, 'rect', { x: X - 18, y: Y - 18, width: 36, height: 38, rx: 5, fill, 'fill-opacity': t === 'o' ? .32 : .42 });
  add(sg, 'text', { x: X, y: Y + 12, fill: ink }, n);
});
[[907, '76.425'], [1049, '58.637'], [1210, '40.850'], [1371, '23.063'], [1523, '5.275']].forEach(([y, t]) => add(k, 'text', { x: 28, y: y + 14, 'font-size': 38, fill: '#999' }, t));
add(k, 'text', { x: 133, y: 907, 'font-size': 36, 'font-weight': 400 }, '72.800');
add(k, 'text', { x: 568, y: 1553, 'font-size': 34, 'font-weight': 400 }, '8.900');
add(k, 'path', { d: 'M107 886H49M69 876L49 886L69 896M683 1542H741M721 1532L741 1542L721 1552', stroke: '#000', 'stroke-width': 3, fill: 'none' });
add(k, 'path', { d: 'M384 1558V1576M570.500 1558V1576M756 1558V1576', stroke: '#888', 'stroke-width': 4 });
add(k, 'text', { x: 15, y: 1620, 'font-size': 39, fill: '#666' }, '2024–12–12');
add(k, 'text', { x: 238, y: 1620, 'font-size': 32, fill: '#e2e2e2' }, '7');
[[329, '06–18'], [515, '09–15'], [648, '12–15']].forEach(([x, t]) => add(k, 'text', { x, y: 1620, 'font-size': 39, 'font-weight': 400, fill: '#808080' }, t));

/* ---- volume ---- */
const v = document.getElementById('vol');
const env = pairs('14,1 190,1 205,6 220,16 235,26 250,22 262,12 275,16 290,4 310,7 330,3 360,3 370,25 380,42 395,24 410,22 430,22 450,28 465,22 477,10 490,45 510,60 540,38 560,28 580,18 600,20 612,6 625,14 650,13 680,16 705,22 720,12 740,20 757,20');
const spikes = { 207: 16, 222: 38, 234: 38, 246: 30, 264: 44, 273: 26, 363: 45, 372: 55, 378: 75, 381: 58, 387: 35, 444: 38, 459: 61, 483: 180, 486: 113, 489: 62, 495: 67, 507: 140, 510: 155, 513: 150, 516: 97, 522: 80, 525: 56, 540: 58, 573: 46, 594: 111, 597: 52, 636: 34, 669: 24, 702: 57, 738: 60, 741: 132, 744: 50 };
const reds = new Set([234, 246, 273, 372, 378, 459, 483, 486, 495, 507, 510, 522, 525, 573, 594, 669, 741, 744, 444]);
for (let x = 15; x < 758; x += 3) {
  const h = spikes[x] || at(env, x) * (.7 + rnd() * .7), red = spikes[x] ? reds.has(x) : rnd() < .42;
  add(v, 'rect', { x: x - 1, y: 1901 - h, width: red ? 3.4 : 2.4, height: h, fill: red ? RED : '#6f9152' });
}
line(v, '190,1898 210,1897 222,1890 234,1877 241,1880 247,1876 255,1882 262,1888 267,1880 272,1884 276,1880 282,1890 292,1894 315,1892 330,1898 345,1892 362,1896 370,1880 378,1855 383,1849 390,1858 397,1870 412,1876 430,1879 440,1870 448,1868 460,1873 470,1872 477,1884 481,1883 487,1840 496,1811 502,1851 506,1845 512,1800 517,1779 522,1795 530,1840 540,1852 548,1853 560,1868 575,1875 592,1884 598,1860 602,1856 607,1858 612,1890 617,1895 630,1886 650,1887 662,1890 675,1884 690,1890 700,1885 705,1872 713,1870 720,1882 732,1890 738,1880 744,1845 751,1841 755,1850 757,1870', '#333', 3.5);
line(v, '14,1899 240,1898 300,1896 365,1895 400,1890 460,1887 485,1885 520,1877 560,1871 600,1870 680,1870 757,1868', '#e67e50', 3.5);

/* ---- detector bars: x, height (negative is below the axis) ---- */
const dt = document.getElementById('det');
const bars = (s, c) => pairs(s).forEach(([x, h]) => add(dt, 'rect', { x: x - 1, y: h > 0 ? 2087 - h : 2087, width: 3, height: Math.abs(h), fill: c }));
bars('15,10 18,14 21,17 52,10 55,6 58,3 61,1 64,1 129,1 132,1 135,2 138,3 141,5 144,6 147,7 150,9 153,6 156,4 159,3 162,2 165,2 168,1 171,1 174,1 177,1 249,1 252,2 255,2 258,3 261,2 264,3 267,2 270,3 273,3 276,2 279,2 282,1 285,1 411,1 414,1 417,2 420,1', '#d6453b');
bars('24,22 27,30 30,38 33,46 36,50 39,59 42,70 45,84 48,114', '#69dff0');
bars('57,-3 60,-9 63,-5 66,-5 69,-12 72,-24 75,-13 78,-10 81,-5 84,-2 87,-1 90,-1 93,-1 183,-5 186,-3 189,-6 192,-12 195,-8 198,-15 201,-16 204,-26 207,-16 210,-22 213,-14 216,-26 222,-16 225,-26 228,-12 231,-6 234,-3 237,-5 240,-16 243,-8 246,-4 249,-1 288,-4 291,-8 294,-6 297,-12 300,-12 303,-25 306,-12 309,-6 312,-2 315,-1 318,-1 321,-1 324,-1 339,-13 342,-22 345,-10 348,-6 351,-3 354,-5 357,-3 360,-8 363,-18 366,-12 369,-18 372,-9 375,-17 378,-8 381,-4 384,-5 387,-8 390,-15 393,-8 396,-4 399,-2 402,-1 405,-1', '#e98cf3');
bars('219,-33', '#7bd95a');

/* ---- KDJ ---- */
const q = document.getElementById('kdj');
const K = pairs('17,2282 25,2278 35,2275 45,2275 52,2290 58,2345 70,2388 80,2370 92,2360 97,2345 106,2384 112,2365 123,2360 132,2305 139,2290 145,2278 152,2290 163,2330 172,2357 180,2362 190,2392 205,2401 220,2402 230,2395 238,2362 242,2370 250,2315 257,2300 264,2320 275,2345 285,2380 302,2396 308,2372 314,2372 322,2355 333,2358 342,2384 353,2380 370,2394 382,2378 391,2390 400,2355 405,2355 418,2318 427,2332 438,2310 449,2297 457,2355 463,2345 470,2365 480,2380 490,2315 500,2298 509,2276 517,2320 528,2355 540,2371 548,2340 562,2380 570,2360 579,2352 592,2378 597,2343 606,2335 615,2314 625,2345 633,2353 642,2353 650,2375 660,2385 668,2340 677,2307 686,2297 693,2302 699,2290 706,2330 715,2370 730,2392 745,2385 757,2378');
line(q, K, '#333', 3.5);
line(q, '17,2295 23,2285 35,2280 50,2280 56,2310 65,2355 75,2374 88,2370 98,2358 108,2374 124,2364 134,2320 145,2292 152,2287 160,2315 170,2345 178,2355 187,2375 205,2394 222,2402 232,2396 242,2378 252,2328 261,2313 275,2330 285,2358 301,2390 312,2375 325,2362 335,2363 345,2378 358,2380 372,2390 384,2382 391,2388 400,2365 408,2358 420,2330 432,2328 442,2318 450,2307 458,2330 467,2340 475,2360 484,2370 494,2325 510,2286 520,2310 530,2340 541,2357 549,2350 563,2370 580,2357 593,2371 603,2345 617,2322 628,2340 643,2352 655,2370 665,2378 676,2340 688,2310 702,2296 710,2320 720,2350 735,2385 748,2382 757,2378', '#e67e50', 3.5);
line(q, '16,2259 19,2262 23,2280 29,2262 37,2276 43,2262 47,2268 50,2300 54,2370 57,2395 61,2421 64,2440 70,2440 74,2405 80,2370 86,2360 90,2352 94,2340 97,2320 101,2370 106,2409 112,2360 118,2353 123,2352 127,2270 133,2255 136,2270 142,2242 147,2255 152,2290 158,2350 165,2372 170,2393 178,2370 185,2407 190,2415 195,2408 200,2414 207,2403 215,2406 228,2403 233,2370 238,2325 242,2350 247,2290 251,2260 256,2253 261,2280 266,2330 273,2355 278,2400 284,2421 290,2408 297,2412 303,2395 307,2350 313,2370 320,2337 326,2358 334,2345 338,2390 342,2407 350,2385 355,2380 362,2397 369,2400 376,2375 383,2370 391,2407 396,2340 400,2320 404,2350 409,2310 416,2287 421,2315 427,2335 430,2313 433,2325 440,2278 444,2300 449,2274 453,2340 457,2409 462,2350 466,2330 470,2380 478,2412 483,2350 487,2280 490,2257 494,2270 500,2265 509,2244 513,2280 518,2340 523,2365 528,2362 535,2407 540,2385 547,2315 552,2360 561,2405 568,2355 577,2336 583,2360 592,2403 595,2312 600,2318 608,2310 613,2292 618,2310 622,2370 628,2375 632,2370 640,2355 645,2385 651,2402 657,2375 665,2398 668,2330 673,2260 676,2254 681,2285 686,2270 692,2298 697,2272 700,2275 705,2330 712,2395 722,2410 735,2390 742,2365 746,2357 752,2380 757,2376', '#c0507c', 3.5);
</script>
</body>
</html>
